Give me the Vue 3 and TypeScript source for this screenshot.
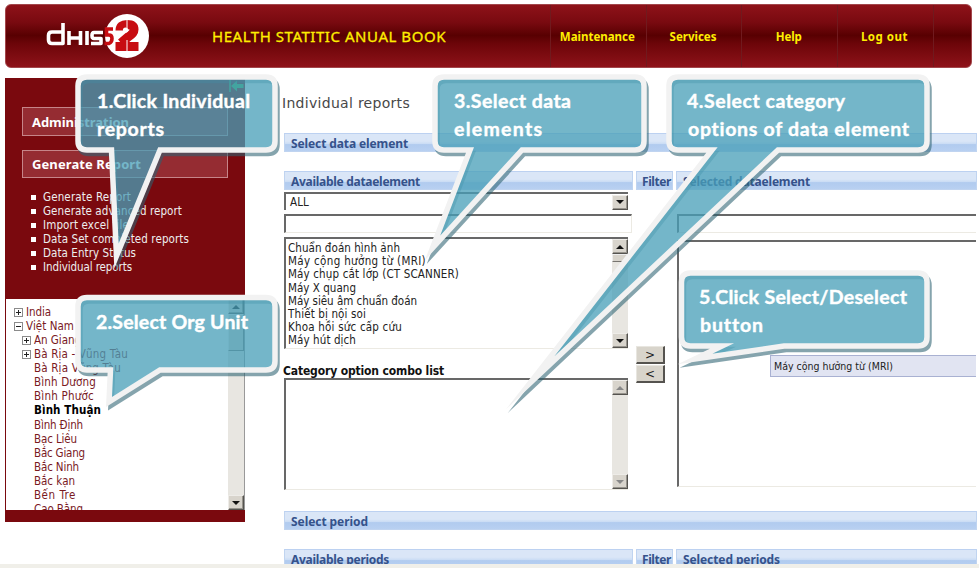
<script setup lang="ts">
import type { Directive } from 'vue'

interface FitText { text: string; w: number }
interface TreeNode extends FitText { level: number; icon?: 'plus' | 'minus'; selected?: boolean }
interface Callout {
  path: string
  lines: { text: string; x: number; y: number; w: number }[]
}

// Tracks a label so that it fills the given width in pixels.
const vFit: Directive<HTMLElement, number> = {
  mounted(el, { value }) {
    const count = (el.textContent ?? '').length
    const width = el.getBoundingClientRect().width
    if (count > 1) el.style.letterSpacing = `${(value - width) / count}px`
  },
}

const nav: FitText[] = [
  { text: 'Maintenance', w: 75 },
  { text: 'Services', w: 47 },
  { text: 'Help', w: 26 },
  { text: 'Log out', w: 47 },
]

const links: FitText[] = [
  { text: 'Generate Report', w: 88 },
  { text: 'Generate advanced report', w: 139 },
  { text: 'Import excel file', w: 86 },
  { text: 'Data Set completed reports', w: 146 },
  { text: 'Data Entry Status', w: 93 },
  { text: 'Individual reports', w: 89 },
]

const tree: TreeNode[] = [
  { text: 'India', w: 25, level: 0, icon: 'plus' },
  { text: 'Việt Nam', w: 48, level: 0, icon: 'minus' },
  { text: 'An Giang', w: 47, level: 1, icon: 'plus' },
  { text: 'Bà Rịa - Vũng Tàu', w: 94, level: 1, icon: 'plus' },
  { text: 'Bà Rịa Vũng Tàu', w: 87, level: 1 },
  { text: 'Bình Dương', w: 62, level: 1 },
  { text: 'Bình Phước', w: 60, level: 1 },
  { text: 'Bình Thuận', w: 67, level: 1, selected: true },
  { text: 'Bình Định', w: 49, level: 1 },
  { text: 'Bạc Liêu', w: 43, level: 1 },
  { text: 'Bắc Giang', w: 51, level: 1 },
  { text: 'Bắc Ninh', w: 45, level: 1 },
  { text: 'Bắc kạn', w: 41, level: 1 },
  { text: 'Bến Tre', w: 42, level: 1 },
  { text: 'Cao Bằng', w: 49, level: 1 },
]

const elements: FitText[] = [
  { text: 'Chuẩn đoán hình ảnh', w: 112 },
  { text: 'Máy cộng hưởng từ (MRI)', w: 138 },
  { text: 'Máy chụp cắt lớp (CT SCANNER)', w: 171 },
  { text: 'Máy X quang', w: 68 },
  { text: 'Máy siêu âm chuẩn đoán', w: 129 },
  { text: 'Thiết bị nội soi', w: 78 },
  { text: 'Khoa hồi sức cấp cứu', w: 114 },
  { text: 'Máy hút dịch', w: 68 },
  { text: 'Máy gây mê', w: 64 },
]

// Rounded speech bubble whose pointer leaves the bottom edge between l and r.
function bubble(x1: number, y1: number, x2: number, y2: number, l: number, r: number, tx: number, ty: number): string {
  const c = 9
  return `M${x1 + c} ${y1}H${x2 - c}Q${x2} ${y1} ${x2} ${y1 + c}V${y2 - c}Q${x2} ${y2} ${x2 - c} ${y2}` +
    `H${r}L${tx} ${ty}L${l} ${y2}H${x1 + c}Q${x1} ${y2} ${x1} ${y2 - c}V${y1 + c}Q${x1} ${y1} ${x1 + c} ${y1}Z`
}

const callouts: Callout[] = [
  {
    path: bubble(78, 77, 275, 150, 111.5, 160, 116.5, 256),
    lines: [
      { text: '1.Click Individual', x: 97, y: 108, w: 153 },
      { text: 'reports', x: 97, y: 136, w: 67 },
    ],
  },
  {
    path: bubble(78, 297.5, 275, 370, 110.5, 160, 109, 402),
    lines: [{ text: '2.Select Org Unit', x: 96, y: 329, w: 152 }],
  },
  {
    path: bubble(435, 77, 644, 150, 470, 522, 432.5, 248),
    lines: [
      { text: '3.Select data', x: 454, y: 108, w: 117 },
      { text: 'elements', x: 454, y: 136, w: 88 },
    ],
  },
  {
    path: bubble(669, 77, 927, 150, 712, 778, 530, 383),
    lines: [
      { text: '4.Select category', x: 687, y: 108, w: 158 },
      { text: 'options of data element', x: 688, y: 136, w: 221 },
    ],
  },
  {
    path: bubble(681.5, 273, 927, 346, 722, 784, 695, 359),
    lines: [
      { text: '5.Click Select/Deselect', x: 699, y: 304, w: 208 },
      { text: 'button', x: 700, y: 332, w: 63 },
    ],
  },
]
</script>

<template>
  <div class="page">
    <header class="banner">
      <svg class="logo" width="106" height="48" viewBox="0 0 106 48">
        <g fill="none" stroke="#fff" stroke-width="3.6" stroke-linejoin="round">
          <path d="M17 10V30.500H6Q2.500 30.500 2.500 27V22.500Q2.500 19 6 19H17" />
          <path d="M23 18V32M23 25H34.500M34.500 18V32" />
          <path d="M41 18V32" />
          <path d="M57 19.500H48Q46 19.500 46 22.500T48 25.500H55V30.500H45" />
        </g>
        <circle cx="81" cy="23" r="22" fill="#fff" />
        <g fill="none" stroke="#c70d12">
          <path d="M67 16H60.500V22H63Q66 22 66 25.500T63 30.500H58.500" stroke-width="3.6" />
          <path d="M74 17.500Q74 11.500 81 11.500Q88 11.500 88 16.500Q88 20.500 82 24L75 30" stroke-width="9" />
        </g>
        <path d="M69.500 29H92.500V38H69.500Z" fill="#c70d12" />
        <path d="M81 5V17M81 27V38" stroke="#fff" stroke-width="1" />
        <circle cx="79.500" cy="17" r="2.600" fill="#fff" />
      </svg>
      <h1><span v-fit="234">HEALTH STATITIC ANUAL BOOK</span></h1>
      <nav>
        <a v-for="n in nav" :key="n.text"><span v-fit="n.w">{{ n.text }}</span></a>
      </nav>
    </header>

    <div class="columns">
      <aside class="side">
        <svg class="hide" width="15" height="12" viewBox="0 0 15 12">
          <path d="M1 0V12" stroke="#35b558" stroke-width="1.500" />
          <path d="M2 6L8 .5V4H14.500V8H8V11.500Z" fill="#35b558" />
        </svg>
        <h2><span v-fit="97">Administration</span></h2>
        <h2><span v-fit="109">Generate Report</span></h2>
        <ul class="links">
          <li v-for="l in links" :key="l.text"><span v-fit="l.w">{{ l.text }}</span></li>
        </ul>
        <div class="tree">
          <div class="nodes">
            <div v-for="t in tree" :key="t.text" class="node" :class="{ child: t.level, leaf: !t.icon, selected: t.selected }">
              <svg v-if="t.icon" width="9" height="9" viewBox="0 0 9 9">
                <rect x=".5" y=".5" width="8" height="8" fill="#fff" stroke="#8b8b8b" />
                <path :d="t.icon === 'plus' ? 'M2 4.500H7M4.500 2V7' : 'M2 4.500H7'" stroke="#222" />
              </svg>
              <span v-fit="t.w">{{ t.text }}</span>
            </div>
          </div>
          <div class="scroll">
            <i class="btn up"></i><i class="thumb long"></i><i class="btn down"></i>
          </div>
        </div>
      </aside>

      <main>
        <h3><span v-fit="128">Individual reports</span></h3>
        <div class="bar"><span v-fit="117">Select data element</span></div>
        <div class="heads">
          <div class="bar"><span v-fit="129">Available dataelement</span></div>
          <div class="bar filter"><span v-fit="29">Filter</span></div>
          <div class="bar"><span v-fit="127">Selected dataelement</span></div>
        </div>
        <div class="picker">
          <section class="available">
            <div class="field select"><span v-fit="19">ALL</span><i class="btn down"></i></div>
            <div class="field text"></div>
            <div class="field list">
              <div class="options">
                <div v-for="e in elements" :key="e.text"><span v-fit="e.w">{{ e.text }}</span></div>
              </div>
              <div class="scroll"><i class="btn up"></i><i class="thumb"></i><i class="btn down"></i></div>
            </div>
            <h4><span v-fit="161">Category option combo list</span></h4>
            <div class="field list combo">
              <div class="options"></div>
              <div class="scroll off"><i class="btn up"></i><i class="btn down"></i></div>
            </div>
          </section>
          <section class="moves">
            <button>&gt;</button>
            <button>&lt;</button>
          </section>
          <section class="chosen">
            <div class="field text"></div>
            <div class="field box">
              <div class="item"><span v-fit="119">Máy cộng hưởng từ (MRI)</span></div>
            </div>
          </section>
        </div>
        <div class="bar"><span v-fit="77">Select period</span></div>
        <div class="heads periods">
          <div class="bar"><span v-fit="98">Available periods</span></div>
          <div class="bar filter"><span v-fit="29">Filter</span></div>
          <div class="bar"><span v-fit="97">Selected periods</span></div>
        </div>
      </main>
    </div>
    <footer></footer>

    <svg class="callouts" width="979" height="568" viewBox="0 0 979 568">
      <defs>
        <mask v-for="(c, i) in callouts" :id="`dim-${i}`" :key="i" maskUnits="userSpaceOnUse" x="0" y="0" width="979" height="568">
          <rect width="979" height="568" fill="#fff" />
          <path :d="c.path" fill="#999" />
        </mask>
      </defs>
      <g v-for="(c, i) in callouts" :key="i">
        <g :mask="`url(#dim-${i})`">
          <path class="shade" :d="c.path" transform="translate(2 3.500)" />
        </g>
        <path class="fill" :d="c.path" />
        <path class="edge" :d="c.path" />
        <text v-for="l in c.lines" :key="l.text" :x="l.x" :y="l.y" :textLength="l.w">{{ l.text }}</text>
      </g>
    </svg>
  </div>
</template>

<style>
body { margin: 0; background: #fff; overflow: hidden; }
</style>

<style scoped>
* { box-sizing: border-box; }
.page {
  position: relative; width: 979px; height: 568px; overflow: hidden;
  display: flex; flex-direction: column; background: #fff;
  font-family: "DejaVu Sans Condensed", "DejaVu Sans", sans-serif; font-stretch: condensed;
  font-size: 11.500px; color: #222; white-space: nowrap;
}
h1, h2, h3, h4, ul { margin: 0; padding: 0; }
.banner {
  margin: 4px 7px 0 5px; height: 64px; flex: none; display: flex; align-items: center;
  border: 1px solid #a2464b; border-radius: 6px;
  background: linear-gradient(#8e1219, #790a10 28%, #580001 49%, #6c0509 62%, #8e1219);
}
.logo { margin-left: 40px; flex: none; margin-top: 1px; }
h1 { margin-left: 60px; width: 338px; font: 400 15px "Noto Sans", sans-serif; color: #ffee00; -webkit-text-stroke: .3px #ffee00; }
nav { display: flex; align-self: stretch; border-right: 1px solid #701a1e; }
nav a {
  width: 95.700px; padding-right: 2px; display: flex; align-items: center; justify-content: center;
  border-left: 1px solid #701a1e; color: #ffee00; font: 700 11.500px "Noto Sans", sans-serif;
}
.columns { display: flex; height: 486px; margin-top: 10px; flex: none; overflow: hidden; }
.side {
  margin-left: 5px; width: 240px; height: 444px; flex: none; background: #7a090e;
  display: flex; flex-direction: column; color: #eee;
}
.hide { align-self: flex-end; margin: 2px 1px 0 0; flex: none; }
.side h2 {
  margin: 15px 17px 0; height: 29px; padding-left: 9px; flex: none; display: flex; align-items: center;
  border: 1px solid #c68589; background: #952c32; color: #fff;
  font: 700 13px "Noto Sans", sans-serif;
}
.side h2 + h2 { margin-top: 14px; height: 28px; }
.links { list-style: none; padding: 12px 0 0 26px; height: 121px; flex: none; }
.links li { height: 14px; display: flex; align-items: center; gap: 7px; }
.links li::before { content: ''; width: 5px; height: 5px; background: #fff; }
.tree { margin-left: 1px; height: 211px; display: flex; background: #fff; border-right: 1px solid #999; overflow: hidden; }
.nodes { flex: 1; padding-top: 6px; }
.node { height: 14.070px; display: flex; align-items: center; gap: 3px; padding-left: 8px; color: #7a1a1f; }
.node svg { flex: none; }
.child { padding-left: 16px; }
.leaf { padding-left: 28px; }
.selected { color: #000; font-weight: 700; }
.scroll { width: 16px; flex: none; display: flex; flex-direction: column; background: #e8e6e1; }
.btn {
  width: 16px; height: 15px; flex: none; display: grid; place-items: center; background: #d8d4cc;
  border: 1px solid; border-color: #eeece8 #55534f #55534f #eeece8; box-shadow: inset -1px -1px #96938c;
}
.btn::before { content: ''; border: 4px solid transparent; }
.up::before { border-bottom-color: #111; border-top: 0; }
.down::before { border-top-color: #111; border-bottom: 0; }
.scroll .down { margin-top: auto; }
.off .up::before { border-bottom-color: #888; }
.off .down::before { border-top-color: #888; }
.thumb { height: 8px; background: #d8d4cc; border: 1px solid; border-color: #eee #77746f #77746f #eee; }
.thumb.long { height: 37px; }

main { width: 693px; margin-left: 39px; display: flex; flex-direction: column; flex: none; }
h3 { height: 55px; flex: none; padding-top: 16px; margin: 0 0 0 -2px; font: 400 14px "DejaVu Sans", sans-serif; color: #484848; line-height: 18px; }
.bar {
  height: 19px; flex: none; padding-left: 6px; display: flex; align-items: center;
  border: 1px solid #c0d4f0; border-top-color: #bcd1f1;
  background: linear-gradient(#dae6f7 0 42%, #c8dbf4 60%, #b1cbef 62%, #b8d0f1);
  color: #35528b; font: 700 12px "Noto Sans", sans-serif;
}
.bar span { padding-top: 1px; }
.heads { display: grid; grid-template-columns: 349px 37px 301px; column-gap: 3px; margin: 19px 0 0; }
.heads .filter { padding-left: 5px; }
.picker { display: flex; height: 321px; flex: none; }
.available { width: 349px; padding-top: 2px; }
.field { border: 1px solid; border-color: #686868 #eceae3 #eceae3 #686868; border-top-width: 2px; border-left-width: 2px; background: #fff; }
.select { width: 344px; height: 18px; display: flex; align-items: center; justify-content: space-between; padding-left: 4px; border-right: 0; border-bottom: 0; }
.text { height: 19px; width: 348px; margin-top: 4px; }
.list { margin-top: 4px; width: 344px; height: 112px; display: flex; overflow: hidden; border-right: 0; }
.options { flex: 1; padding: 2px 0 0 2px; }
.options div { height: 13.200px; line-height: 14px; }
h4 { margin-left: -1px; height: 29px; padding-top: 14px; line-height: 16px; font-size: 12px; color: #111; }
.combo { margin-top: 0; }
.moves { width: 41px; padding: 156px 0 0 3px; display: flex; flex-direction: column; gap: 1px; }
.moves button {
  width: 29px; height: 18px; padding: 0; font: 12px "DejaVu Sans", sans-serif; line-height: 14px; color: #222;
  background: #d8d4cb; border: 1px solid; border-color: #e8e6e0 #55534f #55534f #e8e6e0; border-bottom-width: 2px; border-right-width: 2px;
}
.chosen { width: 301px; padding: 24px 0 0 2px; display: flex; flex-direction: column; margin-left: 1px; }
.chosen .text { margin: 0; width: 100%; border-right: 0; }
.box { margin-top: 7px; height: 247px; padding: 113px 0 0 91px; border-right: 0; }
.item { height: 22px; padding-left: 3px; display: flex; align-items: center; background: #e1e4f2; border: 1px solid #a9b1d2; border-right: 0; font-size: 10.500px; }
footer { height: 4px; background: #f0efe9; flex: none; }

.callouts { position: absolute; left: 0; top: 0; font-variant-ligatures: none; }
.callouts path { stroke-width: 5.500; stroke-miterlimit: 20; }
.callouts .shade { fill: none; stroke: #2c6272; stroke-opacity: .58; }
.callouts .fill { fill: #489eb7; fill-opacity: .755; }
.callouts .edge { fill: none; stroke: #f2f2f2; }
.callouts text { font-family: Lato, "Open Sans", sans-serif; font-weight: 700; font-size: 19.500px; fill: #fff; stroke: #fff; stroke-width: .4px; }
</style>
